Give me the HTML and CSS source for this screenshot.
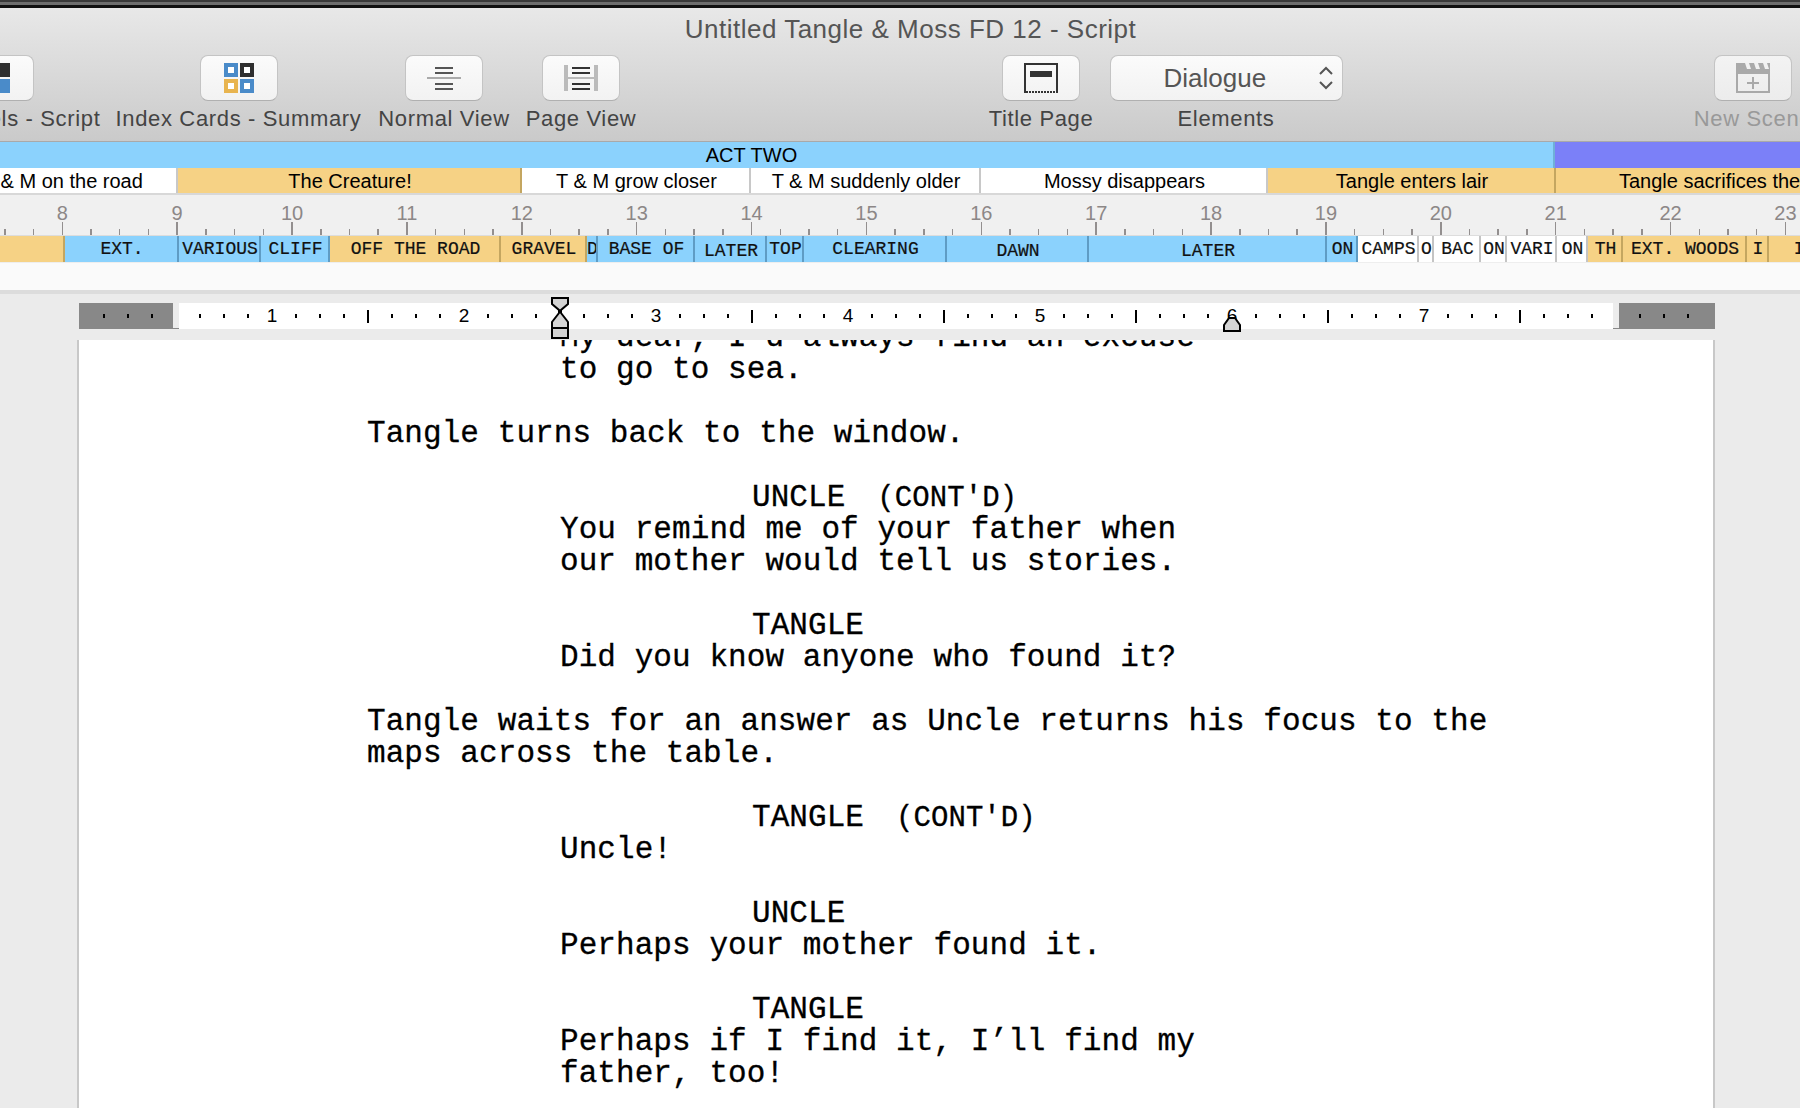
FILE: index.html
```html
<!DOCTYPE html>
<html lang="en">
<head>
    <meta charset="UTF-8">
    <title>Untitled Tangle &amp; Moss FD 12 - Script</title>
    <link rel="stylesheet" href="styles.css">
</head>
<body>
    <div class="window-edge"></div>

    <!-- Title + toolbar -->
    <header class="toolbar">
        <h1 class="window-title">Untitled Tangle &amp; Moss FD 12 - Script</h1>
        <div class="tools">
            <div class="tool tool-first">
                <div class="tool-btn">
                    <svg width="30" height="30" viewBox="0 0 30 30"><rect width="30" height="14" fill="#2f2f2f"/><rect y="16" width="30" height="14" fill="#4a8bc9"/></svg>
                </div>
                <span class="tool-label">Two Panels - Script</span>
            </div>
            <div class="tool">
                <div class="tool-btn">
                    <svg width="30" height="30" viewBox="0 0 30 30">
                        <rect width="14" height="14" fill="#4a8bc9"/><rect x="4" y="4" width="6" height="6" fill="#fff"/>
                        <rect x="16" width="14" height="14" fill="#2f2f2f"/><rect x="20" y="4" width="6" height="6" fill="#fff"/>
                        <rect y="16" width="14" height="14" fill="#e8b44f"/><rect x="4" y="20" width="6" height="6" fill="#fff"/>
                        <rect x="16" y="16" width="14" height="14" fill="#4a8bc9"/><rect x="20" y="20" width="6" height="6" fill="#fff"/>
                    </svg>
                </div>
                <span class="tool-label">Index Cards - Summary</span>
            </div>
            <div class="tool">
                <div class="tool-btn">
                    <svg width="34" height="26" viewBox="0 0 34 26">
                        <rect y="12" width="34" height="2" fill="#aaa"/>
                        <rect x="8" y="2" width="18" height="2" fill="#555"/><rect x="8" y="7" width="18" height="2" fill="#555"/>
                        <rect x="8" y="18" width="18" height="2" fill="#555"/><rect x="8" y="23" width="18" height="2" fill="#555"/>
                    </svg>
                </div>
                <span class="tool-label">Normal View</span>
            </div>
            <div class="tool">
                <div class="tool-btn">
                    <svg width="34" height="26" viewBox="0 0 34 26">
                        <rect width="4" height="26" fill="#bbb"/><rect x="30" width="4" height="26" fill="#bbb"/><rect y="12" width="34" height="2" fill="#bbb"/>
                        <rect x="8" y="2" width="18" height="2" fill="#333"/><rect x="8" y="7" width="18" height="2" fill="#333"/>
                        <rect x="8" y="18" width="18" height="2" fill="#333"/><rect x="8" y="23" width="18" height="2" fill="#333"/>
                    </svg>
                </div>
                <span class="tool-label">Page View</span>
            </div>
            <div class="tool-space"></div>
            <div class="tool">
                <div class="tool-btn">
                    <svg width="34" height="30" viewBox="0 0 34 30">
                        <path d="M1 30V1H33V30" fill="none" stroke="#333" stroke-width="2"/>
                        <rect x="6" y="8" width="22" height="6" fill="#333"/>
                        <path d="M2 29H32" stroke="#333" stroke-width="2" stroke-dasharray="2 1"/>
                    </svg>
                </div>
                <span class="tool-label">Title Page</span>
            </div>
            <div class="tool">
                <div class="tool-btn select-btn">
                    <span class="select-value">Dialogue</span>
                    <svg class="select-arrows" width="16" height="24" viewBox="0 0 16 24"><path d="M2 8L8 2L14 8M2 16L8 22L14 16" fill="none" stroke="#555" stroke-width="2"/></svg>
                </div>
                <span class="tool-label">Elements</span>
            </div>
            <div class="tool-space"></div>
            <div class="tool tool-off">
                <div class="tool-btn">
                    <svg width="34" height="30" viewBox="0 0 34 30">
                        <path d="M0 0H34V10H0Z" fill="#a9a9a9"/>
                        <path d="M9 0H13L15 6H11ZM18 0H22L24 6H20ZM27 0H31L33 6H29Z" fill="#f1f1f1"/>
                        <rect x="1" y="10" width="32" height="19" fill="none" stroke="#a9a9a9" stroke-width="2"/>
                        <path d="M17 14V26M11 20H23" stroke="#a9a9a9" stroke-width="2"/>
                    </svg>
                </div>
                <span class="tool-label">New Scene</span>
            </div>
        </div>
    </header>

    <!-- Structure bars -->
    <div class="act-row">
        <div class="act act-two">ACT TWO</div>
        <div class="act act-three"></div>
    </div>
    <div class="seq-row">
        <div class="seq" style="width:230px">T &amp; M on the road</div>
        <div class="seq yellow" style="width:344px">The Creature!</div>
        <div class="seq" style="width:229px">T &amp; M grow closer</div>
        <div class="seq" style="width:230px">T &amp; M suddenly older</div>
        <div class="seq" style="width:287px">Mossy disappears</div>
        <div class="seq yellow" style="width:288px">Tangle enters lair</div>
        <div class="seq yellow seq-last">Tangle sacrifices the</div>
    </div>

    <!-- Page ruler -->
    <div class="page-ruler">
        <i></i><i></i><span><b>8</b></span><i></i><i></i><i></i>
        <span><b>9</b></span><i></i><i></i><i></i>
        <span><b>10</b></span><i></i><i></i><i></i>
        <span><b>11</b></span><i></i><i></i><i></i>
        <span><b>12</b></span><i></i><i></i><i></i>
        <span><b>13</b></span><i></i><i></i><i></i>
        <span><b>14</b></span><i></i><i></i><i></i>
        <span><b>15</b></span><i></i><i></i><i></i>
        <span><b>16</b></span><i></i><i></i><i></i>
        <span><b>17</b></span><i></i><i></i><i></i>
        <span><b>18</b></span><i></i><i></i><i></i>
        <span><b>19</b></span><i></i><i></i><i></i>
        <span><b>20</b></span><i></i><i></i><i></i>
        <span><b>21</b></span><i></i><i></i><i></i>
        <span><b>22</b></span><i></i><i></i><i></i>
        <span><b>23</b></span><i></i>
    </div>

    <!-- Scene strip -->
    <div class="scene-row">
        <div class="scene yellow" style="width:65px"></div>
        <div class="scene blue" style="width:114px">EXT.</div>
        <div class="scene blue" style="width:82px">VARIOUS</div>
        <div class="scene blue" style="width:69px">CLIFF</div>
        <div class="scene yellow" style="width:171px">OFF THE ROAD</div>
        <div class="scene yellow" style="width:86px">GRAVEL</div>
        <div class="scene blue" style="width:11px">D</div>
        <div class="scene blue" style="width:97px">BASE OF</div>
        <div class="scene blue low" style="width:72px">LATER</div>
        <div class="scene blue" style="width:37px">TOP</div>
        <div class="scene blue" style="width:143px">CLEARING</div>
        <div class="scene blue low" style="width:142px">DAWN</div>
        <div class="scene blue low" style="width:238px">LATER</div>
        <div class="scene blue" style="width:31px">ON</div>
        <div class="scene" style="width:61px">CAMPS</div>
        <div class="scene" style="width:15px">O</div>
        <div class="scene" style="width:47px">BAC</div>
        <div class="scene" style="width:26px">ON</div>
        <div class="scene" style="width:50px">VARI</div>
        <div class="scene" style="width:31px">ON</div>
        <div class="scene yellow" style="width:35px">TH</div>
        <div class="scene yellow" style="width:124px">EXT. WOODS</div>
        <div class="scene yellow" style="width:22px">I</div>
        <div class="scene yellow scene-last">INT</div>
    </div>
    <div class="strip-space"></div>

    <!-- Script page -->
    <main class="doc">
        <div class="doc-ruler">
            <i></i><i></i><i></i><u></u>
            <i></i><i></i><i></i><b>1</b><i></i><i></i><i></i><s></s>
            <i></i><i></i><i></i><b>2</b><i></i><i></i><i></i><s></s>
            <i></i><i></i><i></i><b>3</b><i></i><i></i><i></i><s></s>
            <i></i><i></i><i></i><b>4</b><i></i><i></i><i></i><s></s>
            <i></i><i></i><i></i><b>5</b><i></i><i></i><i></i><s></s>
            <i></i><i></i><i></i><b>6</b><i></i><i></i><i></i><s></s>
            <i></i><i></i><i></i><b>7</b><i></i><i></i><i></i><s></s>
            <i></i><i></i><i></i><u></u>
            <i></i><i></i><i></i>
            <svg class="marker marker-indent" width="18" height="43" viewBox="0 0 18 43">
                <path d="M1 1H17V7L10 13V16L17 25V41H1V25L8 16V13L1 7Z" fill="#d4d4d4" stroke="#000" stroke-width="2"/>
                <path d="M1 31H17" stroke="#000" stroke-width="2"/>
            </svg>
            <svg class="marker marker-right" width="18" height="16" viewBox="0 0 18 16">
                <path d="M1 15V9L6 2H12L17 9V15Z" fill="#d4d4d4" stroke="#000" stroke-width="2"/>
            </svg>
        </div>
        <div class="page">
            <p class="line dialogue cut">My dear, I’d always find an excuse</p>
            <p class="line dialogue">to go to sea.</p>

            <p class="line action gap">Tangle turns back to the window.</p>

            <p class="line character gap">UNCLE<span class="cont">  (CONT'D)</span></p>
            <p class="line dialogue">You remind me of your father when</p>
            <p class="line dialogue">our mother would tell us stories.</p>

            <p class="line character gap">TANGLE</p>
            <p class="line dialogue">Did you know anyone who found it?</p>

            <p class="line action gap">Tangle waits for an answer as Uncle returns his focus to the</p>
            <p class="line action">maps across the table.</p>

            <p class="line character gap">TANGLE<span class="cont">  (CONT'D)</span></p>
            <p class="line dialogue">Uncle!</p>

            <p class="line character gap">UNCLE</p>
            <p class="line dialogue">Perhaps your mother found it.</p>

            <p class="line character gap">TANGLE</p>
            <p class="line dialogue">Perhaps if I find it, I’ll find my</p>
            <p class="line dialogue">father, too!</p>
        </div>
    </main>
</body>
</html>
```

FILE: styles.css
```css
* {
    margin: 0;
    padding: 0;
    box-sizing: border-box;
}

html, body {
    height: 100%;
    overflow: hidden;
}

body {
    display: flex;
    flex-direction: column;
    background: #ebebeb;
    font-family: "Liberation Sans", Arial, sans-serif;
}

.window-edge {
    flex: none;
    height: 8px;
    background: linear-gradient(to bottom, #3a3a3a 2px, #6e6e6e 2px, #6e6e6e 5px, #111 5px);
}

/* Toolbar */
.toolbar {
    flex: none;
    height: 134px;
    background: linear-gradient(to bottom, #e8e8e8, #cacaca);
    border-bottom: 1px solid #a9a9a9;
}

.window-title {
    height: 47px;
    padding-left: 21px;
    text-align: center;
    font-size: 26px;
    font-weight: normal;
    letter-spacing: 0.5px;
    line-height: 42px;
    color: #555;
}

.tools {
    display: grid;
    grid-template-columns: 229px 259px 152px 122px 328px 142px 228px 340px 146px;
    margin-left: -120px;
}

.tool {
    display: flex;
    flex-direction: column;
    align-items: center;
    gap: 4px;
}

.tool-btn {
    display: flex;
    align-items: center;
    justify-content: center;
    width: 78px;
    height: 46px;
    background: linear-gradient(to bottom, #fbfbfb, #f2f2f2);
    border: 1px solid #c4c4c4;
    border-bottom-color: #b0b0b0;
    border-radius: 8px;
}

.tool-label {
    font-size: 22px;
    letter-spacing: 0.65px;
    line-height: 28px;
    color: #444;
    white-space: nowrap;
}

.tool-first .tool-label {
    margin-left: 10px;
}

.tool-off .tool-btn {
    background: linear-gradient(to bottom, #f3f3f3, #ececec);
}

.tool-off .tool-label {
    color: #999;
}

.select-btn {
    flex: none;
    width: 233px;
    justify-content: space-between;
    padding: 0 8px 0 53px;
}

.select-value {
    font-size: 26px;
    line-height: 48px;
    color: #555;
}

/* Act and sequence bars */
.act-row, .seq-row, .scene-row {
    display: flex;
    flex: none;
    white-space: nowrap;
}

.act-row {
    height: 26px;
    margin-left: -52px;
}

.act {
    font-size: 20px;
    line-height: 26px;
    text-align: center;
}

.act-two {
    flex: none;
    width: 1607px;
    padding-left: 2px;
    background: #8bd2fd;
    border-right: 2px solid #6fb0d8;
}

.act-three {
    flex: 1;
    background: #7b80f8;
}

.seq-row {
    height: 27px;
    margin-left: -52px;
    background: #d8d8d8;
    border-bottom: 2px solid #d8d8d8;
}

.seq {
    flex: none;
    padding-left: 2px;
    font-size: 20px;
    line-height: 27px;
    text-align: center;
    background: #fff;
    border-right: 2px solid #c8c8c8;
    color: #000;
}

.seq.yellow {
    background: #f6d285;
    border-right-color: #c4a660;
}

.seq-last {
    flex: 1;
    padding-left: 63px;
    text-align: left;
    border-right: none;
}

/* Page ruler along the top */
.page-ruler {
    display: flex;
    flex: none;
    align-items: flex-end;
    height: 41px;
    margin-left: -9.5px;
    background: #f0f0f0;
    border-bottom: 1px solid #ddd;
    color: #8c8787;
}

.page-ruler i, .page-ruler span {
    display: flex;
    flex: none;
    flex-direction: column;
    align-items: center;
    width: 28.725px;
}

.page-ruler i::after, .page-ruler span::after {
    content: "";
    width: 1.5px;
    height: 6px;
    background: #938f8f;
}

.page-ruler span::after {
    height: 13px;
}

.page-ruler b {
    font-size: 20px;
    font-weight: normal;
    line-height: 18px;
}

/* Scene strip */
.scene-row {
    height: 27px;
    background: #eee;
}

.scene {
    display: flex;
    flex: none;
    justify-content: center;
    height: 26px;
    padding-left: 2px;
    overflow: hidden;
    font-family: "Liberation Mono", "Courier New", monospace;
    font-size: 18px;
    line-height: 27px;
    -webkit-text-stroke: 0.2px #111;
    background: #fff;
    border-right: 2px solid #c4c4c4;
    color: #111;
}

.scene.blue {
    background: #8bd2fd;
    border-right-color: #5f9cc4;
}

.scene.yellow {
    background: #f6d285;
    border-right-color: #c4a660;
}

.scene.low {
    line-height: 31px;
}

.scene-last {
    width: 80px;
    border-right: none;
}

.strip-space {
    flex: none;
    height: 31px;
    background: #fafafa;
    border-bottom: 4px solid #dcdcdc;
}

/* Document area */
.doc {
    flex: 1;
    min-height: 0;
    padding: 9px 0 0 77px;
}

.doc-ruler {
    position: relative;
    display: flex;
    align-items: center;
    width: 1636px;
    height: 26px;
    margin-left: 2px;
    padding-left: 13px;
    background:
        linear-gradient(#888, #888) 94px 100% / 6px 1px no-repeat,
        linear-gradient(#888, #888) 1534px 100% / 6px 1px no-repeat,
        linear-gradient(to right, #888 94px, #ececec 94px, #ececec 100px, #fff 100px, #fff 1534px, #ececec 1534px, #ececec 1540px, #888 1540px);
    font-size: 19px;
}

.doc-ruler i, .doc-ruler s, .doc-ruler b, .doc-ruler u {
    display: flex;
    flex: none;
    align-items: center;
    justify-content: center;
    width: 24px;
    font-weight: normal;
    color: #000;
    text-decoration: none;
}

.doc-ruler i::after, .doc-ruler s::after {
    content: "";
    width: 2px;
    height: 4px;
    background: #000;
}

.doc-ruler s::after {
    height: 13px;
}

.marker {
    position: absolute;
}

.marker-indent {
    top: -6px;
    left: 472px;
}

.marker-right {
    top: 13px;
    left: 1144px;
}

.page {
    width: 1638px;
    height: 800px;
    margin-top: 11px;
    padding-left: 288px;
    overflow: hidden;
    background: #fff;
    border-left: 2px solid #c8c8c8;
    border-right: 2px solid #c8c8c8;
}

.line {
    height: 32px;
    font-family: "Liberation Mono", "Courier New", monospace;
    font-size: 31px;
    letter-spacing: 0.07px;
    line-height: 32px;
    -webkit-text-stroke: 0.3px #000;
    white-space: pre;
    color: #000;
}

.line.cut {
    margin-top: -18px;
}

.line.gap {
    margin-top: 32px;
}

.dialogue {
    margin-left: 193px;
}

.character {
    margin-left: 385px;
}

.cont {
    margin-left: -3px;
    font-size: 29px;
}
```
